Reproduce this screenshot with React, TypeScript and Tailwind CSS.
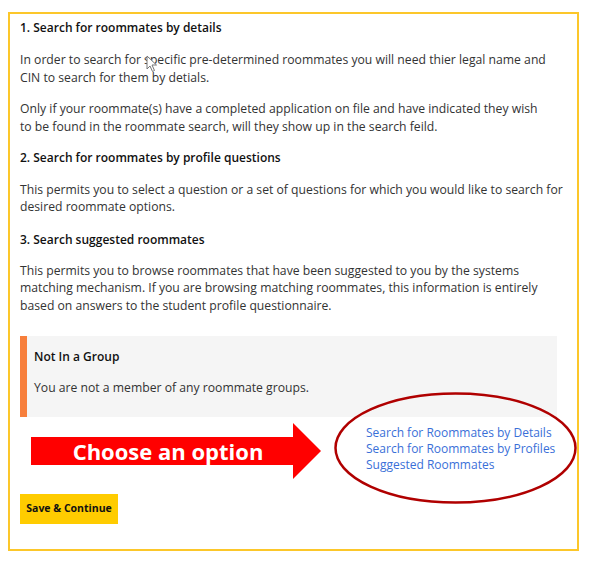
import React from "react";

export default function App() {
  const font = { fontFamily: '"Open Sans", "Noto Sans", sans-serif' };
  return (
    <div className="relative w-[591px] h-[565px] bg-white" style={font}>
      <div className="absolute left-[146px] top-[55px] z-10">
        <svg width="12" height="18" viewBox="0 0 12 18">
          <path d="M1 1 L1 14 L4 11 L6.5 16.5 L8.5 15.5 L6 10 L10.5 10 Z" fill="white" stroke="#777" strokeWidth="1" strokeLinejoin="round" />
        </svg>
      </div>
      <div className="pt-[12px] pl-[8px]">
        <div className="w-[571px] h-[539px] border-2 border-[#fcc72a] pl-[10px] pr-[20px] pt-[5px]">
          <h2 className="text-[12px] leading-[18px] font-semibold text-[#111]">1. Search for roommates by details</h2>
          <p className="mt-[14px] text-[12.2px] leading-[17.5px] text-[#333] whitespace-nowrap">
            In order to search for specific pre-determined roommates you will need thier legal name and<br />
            CIN to search for them by detials.
          </p>
          <p className="mt-[14px] text-[12.2px] leading-[17.5px] text-[#333] whitespace-nowrap">
            Only if your roommate(s) have a completed application on file and have indicated they wish<br />
            to be found in the roommate search, will they show up in the search feild.
          </p>
          <h2 className="mt-[13.5px] text-[12px] leading-[18px] font-semibold text-[#111]">2. Search for roommates by profile questions</h2>
          <p className="mt-[14px] text-[12.2px] leading-[17.5px] text-[#333] whitespace-nowrap">
            This permits you to select a question or a set of questions for which you would like to search for<br />
            desired roommate options.
          </p>
          <h2 className="mt-[15px] text-[12px] leading-[18px] font-semibold text-[#111]">3. Search suggested roommates</h2>
          <p className="mt-[13px] text-[12.2px] leading-[17.5px] text-[#333] whitespace-nowrap">
            This permits you to browse roommates that have been suggested to you by the systems<br />
            matching mechanism. If you are browsing matching roommates, this information is entirely<br />
            based on answers to the student profile questionnaire.
          </p>
          <div className="mt-[22px] flex h-[81px] bg-[#f5f5f5]">
            <div className="w-[7px] bg-[#f77f3c]" />
            <div className="pl-[7px] pt-[12px]">
              <div className="text-[12px] leading-[18px] font-semibold text-[#111]">Not In a Group</div>
              <div className="mt-[13px] text-[12.2px] leading-[17.5px] text-[#333]">You are not a member of any roommate groups.</div>
            </div>
          </div>
          <div className="mt-[6px] flex">
            <div className="relative ml-[11px] w-[291px] h-[57px]">
              <svg className="absolute inset-0" width="291" height="57" viewBox="0 0 291 57">
                <polygon points="0,14 262,14 262,0 290,28 262,56 262,42 0,42" fill="#ff0000" />
              </svg>
              <div
                className="absolute left-[6px] top-[14px] w-[262px] h-[28px] flex items-center justify-center text-white font-bold text-[22px] leading-none"
                style={{ fontFamily: '"Open Sans", sans-serif' }}
              >
                Choose an option
              </div>
            </div>
            <div className="ml-[44px] pt-[2px] flex flex-col text-[12px] leading-[16px] text-[#3a6fd8]">
              <a>Search for Roommates by Details</a>
              <a>Search for Roommates by Profiles</a>
              <a>Suggested Roommates</a>
            </div>
          </div>
          <button className="mt-[14px] block w-[98px] h-[30px] bg-[#ffcc00] text-[10.5px] font-bold text-[#111]">
            Save &amp; Continue
          </button>
        </div>
      </div>
      <svg className="absolute left-[333px] top-[391px]" width="245" height="114" viewBox="0 0 245 114">
        <ellipse cx="122.5" cy="57" rx="120" ry="54.5" fill="none" stroke="#b00000" strokeWidth="2.5" />
      </svg>
    </div>
  );
}
